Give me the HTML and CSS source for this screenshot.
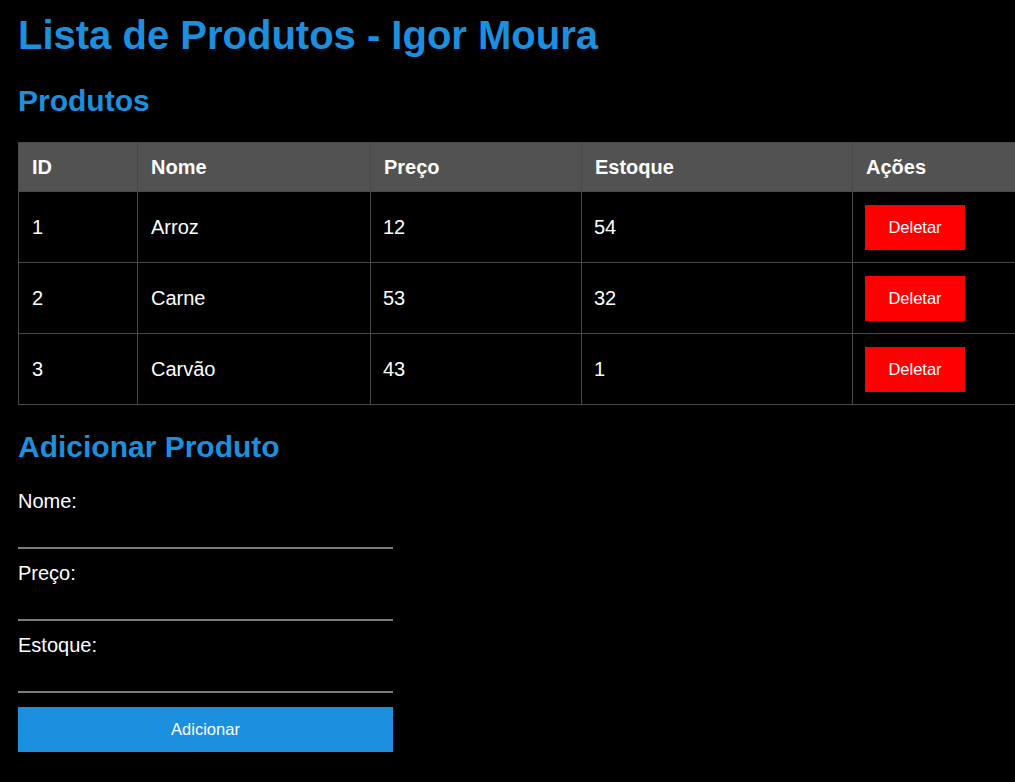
FILE: index.html
```html
<!DOCTYPE html>
<html lang="pt-BR">
<head>
<meta charset="utf-8">
<title>Lista de Produtos</title>
<link rel="stylesheet" href="styles.css">
</head>
<body>
  <h1 class="title">Lista de Produtos - Igor Moura</h1>
  <h2 class="section">Produtos</h2>
  <table class="products">
    <colgroup>
      <col class="c-id"><col class="c-nome"><col class="c-preco"><col class="c-estoque"><col class="c-acoes">
    </colgroup>
    <thead>
      <tr><th>ID</th><th>Nome</th><th>Preço</th><th>Estoque</th><th>Ações</th></tr>
    </thead>
    <tbody>
      <tr><td>1</td><td>Arroz</td><td>12</td><td>54</td><td><button class="btn-delete">Deletar</button></td></tr>
      <tr><td>2</td><td>Carne</td><td>53</td><td>32</td><td><button class="btn-delete">Deletar</button></td></tr>
      <tr><td>3</td><td>Carvão</td><td>43</td><td>1</td><td><button class="btn-delete">Deletar</button></td></tr>
    </tbody>
  </table>
  <h2 class="section section-form">Adicionar Produto</h2>
  <form class="form">
    <label class="label" for="nome">Nome:</label>
    <input class="input" id="nome" type="text">
    <label class="label" for="preco">Preço:</label>
    <input class="input" id="preco" type="text">
    <label class="label" for="estoque">Estoque:</label>
    <input class="input" id="estoque" type="text">
    <button class="btn-add" type="button">Adicionar</button>
  </form>
</body>
</html>
```
FILE: styles.css
```css
html, body {
  overflow-x: hidden;
}
body {
  margin: 0;
  padding: 12px 18px 20px;
  background: #000;
  color: #fff;
  font-family: "Liberation Sans", Arial, sans-serif;
}
.title {
  margin: 0 0 26px;
  font-size: 40px;
  line-height: 46px;
  font-weight: bold;
  color: #1c8fdf;
}
.section {
  margin: 24px 0;
  font-size: 30px;
  line-height: 34px;
  font-weight: bold;
  color: #1c8fdf;
}
.section-form {
  margin-top: 25px;
}
.products {
  border-collapse: collapse;
  table-layout: fixed;
  width: 1014px;
  font-size: 20px;
}
.c-id { width: 119px; }
.c-nome { width: 233px; }
.c-preco { width: 211px; }
.c-estoque { width: 271px; }
.c-acoes { width: 180px; }
.products th {
  background: #525252;
  border: 1px solid #484848;
  padding: 13px 13px 12px;
  line-height: 23px;
  text-align: left;
  font-weight: bold;
}
.products td {
  border: 1px solid #4a4a4a;
  padding: 13px 13px 12px 12px;
  line-height: 23px;
  vertical-align: middle;
}
.products td:first-child,
.products td:nth-child(2) {
  padding-left: 13px;
}
.btn-delete {
  display: block;
  width: 100px;
  height: 45px;
  border: none;
  background: #ff0000;
  color: #fff;
  font-family: "Liberation Sans", Arial, sans-serif;
  font-size: 16.5px;
  padding: 0;
}
.form {
  display: flex;
  flex-direction: column;
  width: 375px;
}
.label {
  font-size: 20px;
  line-height: 26px;
}
.input {
  height: 35px;
  box-sizing: border-box;
  margin: 0 0 11px;
  border: none;
  border-bottom: 2px solid #7a7a7a;
  background: transparent;
  color: #fff;
  font-size: 18px;
  padding: 0;
}
.input:last-of-type {
  margin-bottom: 14px;
}
.btn-add {
  height: 45px;
  border: none;
  background: #1c8fdf;
  color: #fff;
  font-family: "Liberation Sans", Arial, sans-serif;
  font-size: 16.5px;
}
```
